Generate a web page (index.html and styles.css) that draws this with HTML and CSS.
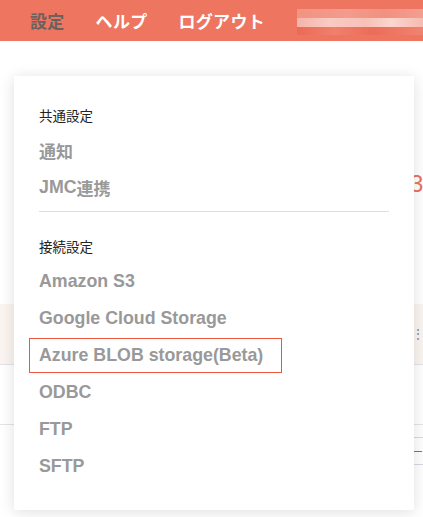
FILE: index.html
```html
<!DOCTYPE html>
<html lang="ja">
<head>
<meta charset="utf-8">
<link rel="stylesheet" href="styles.css">
</head>
<body>
<header class="topbar">
  <nav class="nav">
    <span class="nav-item nav-active">設定</span>
    <span class="nav-item">ヘルプ</span>
    <span class="nav-item">ログアウト</span>
  </nav>
  <div class="user-blur">
    <div class="blur-row blur-a"></div>
    <div class="blur-row blur-b"></div>
    <div class="blur-row blur-c"></div>
  </div>
</header>

<main class="page">
  <div class="page-title">33</div>
  <div class="band"><span class="band-icon">⋮</span></div>
  <div class="row-line"></div>
  <div class="field"><span class="field-text">ー:</span></div>
</main>

<div class="menu">
  <div class="menu-caption">共通設定</div>
  <div class="menu-list">
    <a class="menu-item menu-item-ja">通知</a>
    <a class="menu-item">JMC<span class="ja">連携</span></a>
  </div>
  <hr class="menu-divider">
  <div class="menu-caption menu-caption-second">接続設定</div>
  <div class="menu-list">
    <a class="menu-item">Amazon S3</a>
    <a class="menu-item">Google Cloud Storage</a>
    <a class="menu-item menu-item-focus">Azure BLOB storage(Beta)</a>
    <a class="menu-item">ODBC</a>
    <a class="menu-item">FTP</a>
    <a class="menu-item">SFTP</a>
  </div>
</div>
</body>
</html>
```

FILE: styles.css
```css
* { box-sizing: border-box; }

html, body {
  margin: 0;
  padding: 0;
  background: #ffffff;
  width: 423px;
  height: 517px;
  overflow: hidden;
  font-family: "Liberation Sans", "Noto Sans CJK JP", sans-serif;
}

body { position: relative; }

.topbar {
  height: 41px;
  background: #ee7560;
  display: flex;
  align-items: center;
  justify-content: space-between;
  padding-left: 30px;
}

.nav {
  display: flex;
  gap: 31px;
}

.nav-item {
  font-family: "Noto Sans CJK JP", sans-serif;
  font-weight: 700;
  font-size: 17px;
  line-height: 20px;
  color: #ffffff;
  letter-spacing: 0.3px;
}

.nav-active { color: #6b625f; }

.user-blur {
  width: 126px;
  display: flex;
  flex-direction: column;
  align-self: flex-start;
  margin-top: 9px;
}

.blur-row { height: 9px; }
.blur-a { background: linear-gradient(90deg, rgba(255,255,255,0.22), rgba(255,255,255,0.28) 40%, rgba(255,255,255,0.2) 70%, rgba(255,255,255,0.3)); }
.blur-b { background: linear-gradient(90deg, rgba(255,255,255,0.45), rgba(255,255,255,0.62) 25%, rgba(255,255,255,0.55) 55%, rgba(255,255,255,0.7) 75%, rgba(255,255,255,0.5)); }
.blur-c { height: 8px; background: linear-gradient(90deg, rgba(230,90,70,0.4), rgba(255,255,255,0.08) 30%, rgba(230,90,70,0.3) 60%, rgba(255,255,255,0.1)); }

.page {
  display: flex;
  flex-direction: column;
}

.page-title {
  margin-top: 128px;
  padding-left: 410px;
  font-size: 24px;
  line-height: 30px;
  font-weight: 400;
  color: #e8735e;
  white-space: nowrap;
}

.band {
  margin-top: 105px;
  height: 61px;
  background: #fbf5f2;
  border-bottom: 1px solid #e4e4e8;
  display: flex;
  align-items: center;
  padding-left: 412px;
}

.band-icon { color: #7a7f95; font-size: 12px; }

.row-line {
  margin-top: 59px;
  border-top: 1px solid #e4e4e8;
}

.field {
  margin-top: 12px;
  margin-left: 400px;
  height: 28px;
  border-top: 1px solid #d8d8e0;
  border-bottom: 1px solid #d8d8e0;
  display: flex;
  align-items: center;
  padding-left: 12px;
}

.field-text { font-size: 11px; color: #777; white-space: nowrap; }

.menu {
  position: absolute;
  left: 14px;
  top: 76px;
  width: 400px;
  height: 434px;
  background: #ffffff;
  box-shadow: 0 2px 14px rgba(0, 0, 0, 0.13);
  padding: 29px 25px 0 25px;
}

.menu-caption {
  font-family: "Noto Sans CJK JP", sans-serif;
  font-size: 13.5px;
  line-height: 20px;
  color: #222222;
  margin-bottom: 8px;
}

.menu-caption-second { margin-top: 24px; }

.menu-list {
  display: flex;
  flex-direction: column;
  align-items: flex-start;
  gap: 2px;
  margin-left: -10px;
}

.menu-item {
  height: 35px;
  display: flex;
  align-items: center;
  padding: 0 18px 0 9px;
  border: 1px solid transparent;
  font-size: 17.8px;
  font-weight: 700;
  color: #999999;
  white-space: nowrap;
}

.menu-item-ja,
.ja {
  font-family: "Noto Sans CJK JP", sans-serif;
  font-size: 17px;
}

.menu-item-focus { border-color: #f0553e; }

.menu-divider {
  margin: 6px 0 0 0;
  border: 0;
  border-top: 1px solid #dedede;
  height: 0;
}
```
